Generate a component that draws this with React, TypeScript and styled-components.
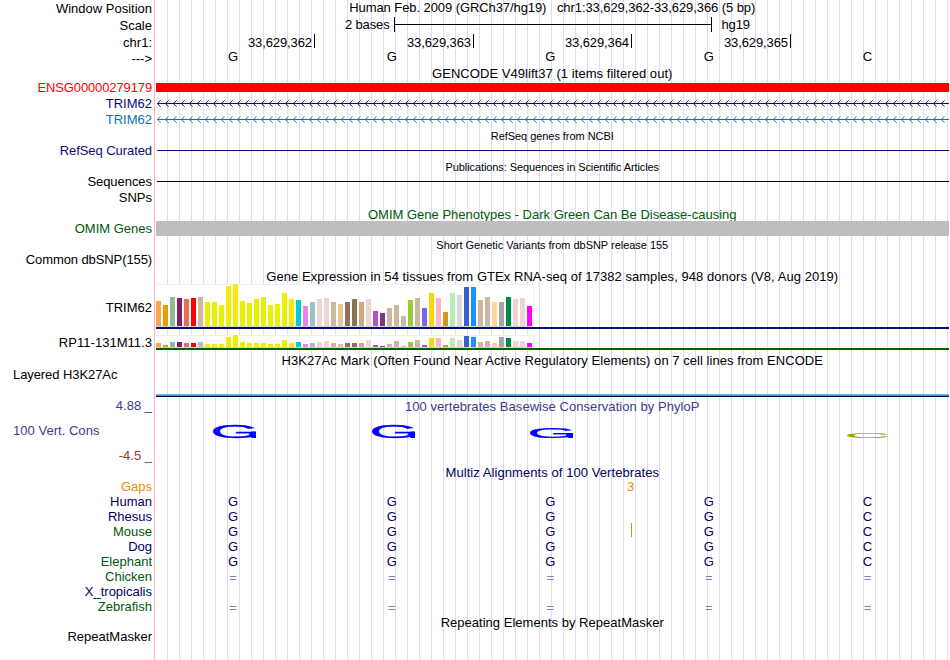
import { ReactNode } from 'react';
import styled, { createGlobalStyle } from 'styled-components';

const GlobalStyle = createGlobalStyle`
	body {
		margin: 0;
		background: #fff;
	}
`;

const Browser = styled.div`
	width: 949px;
	height: 660px;
	overflow: hidden;
	font: 13px/15px 'Liberation Sans', Arial, sans-serif;
	color: #000;
	background:
		linear-gradient(#ffb4b4, #ffb4b4) 154px 0 / 1px 100% no-repeat,
		repeating-linear-gradient(
				to right,
				transparent 0 11px,
				#dcdcf8 11px 12px
			)
			156px 0 / 793px 100% no-repeat;
`;

const StyledRow = styled.div<{ $height: number }>`
	display: flex;
	height: ${(p) => p.$height}px;
`;

const Label = styled.div<{
	$top?: number;
	$color?: string;
	$left?: boolean;
	$spacing?: number;
}>`
	box-sizing: border-box;
	flex: none;
	width: 152px;
	margin-right: 4px;
	padding-top: ${(p) => p.$top ?? 0}px;
	padding-left: ${(p) => (p.$left ? 13 : 0)}px;
	text-align: ${(p) => (p.$left ? 'left' : 'right')};
	color: ${(p) => p.$color ?? '#000'};
	letter-spacing: ${(p) => p.$spacing ?? 0}px;
	white-space: pre;
`;

const Content = styled.div`
	position: relative;
	width: 793px;
`;

const Title = styled.div<{
	$top?: number;
	$color?: string;
	$small?: boolean;
	$spacing?: number;
}>`
	padding-top: ${(p) => p.$top ?? 0}px;
	padding-right: 0.5px;
	font-size: ${(p) => (p.$small ? 11 : 13)}px;
	line-height: ${(p) => (p.$small ? 12 : 15)}px;
	letter-spacing: ${(p) => p.$spacing ?? 0}px;
	color: ${(p) => p.$color ?? '#000'};
	text-align: center;
	white-space: pre;
`;

const Scale = styled.div`
	display: flex;
	padding-left: 189px;
	letter-spacing: -0.15px;
`;

const ScaleBar = styled.div`
	box-sizing: border-box;
	width: 318px;
	height: 15px;
	margin: 0 9px 0 5px;
	border: solid #000;
	border-width: 0 1px;
	background: linear-gradient(#000, #000) 0 7px / 100% 1px no-repeat;
`;

const Ruler = styled.div`
	display: grid;
	grid-template-columns: 159px 159px 158px 159px;
	height: 14px;
	letter-spacing: -0.1px;
`;

const Tick = styled.div`
	padding: 1px 2px 0 0;
	border-right: 1px solid #000;
	height: 13px;
	text-align: right;
`;

const Bases = styled.div<{ $color?: string; $top?: number }>`
	display: grid;
	grid-template-columns: repeat(5, 158.6px);
	padding-top: ${(p) => p.$top ?? 0}px;
	color: ${(p) => p.$color ?? '#000'};
	text-align: center;
	span {
		padding-right: 4.4px;
	}
`;

const Bar = styled.div<{ $top?: number; $height: number; $color: string }>`
	height: ${(p) => p.$height}px;
	margin-top: ${(p) => p.$top ?? 0}px;
	background: ${(p) => p.$color};
`;

const Line = styled.div<{ $color: string }>`
	height: 1px;
	margin: 7px 0 0 1px;
	background: ${(p) => p.$color};
`;

const StyledArrows = styled.svg`
	display: block;
	margin-top: 4px;
`;

const Tissues = styled.div<{ $height: number }>`
	box-sizing: border-box;
	display: flex;
	align-items: flex-end;
	gap: 2px;
	width: 378px;
	height: ${(p) => p.$height}px;
	border: 1px solid #f0f0f0;
	border-left: 0;
	border-bottom-color: #d2d2d2;
	background: #fff;
`;

const Tissue = styled.div<{ $height: number; $color: string }>`
	flex: none;
	width: 5px;
	height: ${(p) => p.$height}px;
	background: ${(p) => p.$color};
`;

const Signal = styled.div`
	height: 3px;
	margin-top: 27px;
	background: linear-gradient(#5abef0 0 1px, #3c96d2 1px 2px, #000028 2px 3px);
`;

const LogoCell = styled.svg`
	width: 158.6px;
	height: 25px;
	overflow: visible;
`;

const GapCount = styled.div`
	padding-left: 471px;
	color: #f08c00;
`;

const InsertMark = styled.div`
	position: absolute;
	left: 475px;
	top: -1px;
	width: 1px;
	height: 14px;
	background: #dc8c14;
`;

const navy = '#000064';
const green = '#005a0a';

// colour, TRIM62 height, RP11-131M11.3 height
const tissues: [string, number, number][] = [
	['#ffa54f', 25, 4],
	['#ee9a00', 21, 2],
	['#8fbc8f', 29, 5],
	['#8b1c62', 28, 5],
	['#ee6a50', 27, 4],
	['#ff0000', 28, 4],
	['#cdb79e', 29, 5],
	['#eeee00', 24, 3],
	['#eeee00', 24, 3],
	['#eeee00', 21, 3],
	['#eeee00', 40, 10],
	['#eeee00', 42, 12],
	['#eeee00', 25, 5],
	['#eeee00', 23, 4],
	['#eeee00', 27, 4],
	['#eeee00', 29, 4],
	['#eeee00', 21, 3],
	['#eeee00', 22, 3],
	['#eeee00', 33, 7],
	['#eeee00', 27, 4],
	['#00cdcd', 26, 5],
	['#ee82ee', 20, 3],
	['#9ac0cd', 24, 4],
	['#eed5d2', 27, 5],
	['#eed5d2', 28, 6],
	['#cdb79e', 24, 4],
	['#eec591', 22, 3],
	['#8b7355', 24, 4],
	['#8b7355', 27, 4],
	['#cdaa7d', 24, 4],
	['#eed5d2', 27, 7],
	['#b452cd', 15, 2],
	['#7a378b', 13, 1],
	['#cdb79e', 18, 3],
	['#cdb79e', 21, 6],
	['#cdb79e', 10, 1],
	['#9acd32', 26, 5],
	['#cdb79e', 28, 7],
	['#7a67ee', 18, 2],
	['#ffd700', 33, 9],
	['#ffb6c1', 28, 9],
	['#cd9b1d', 14, 2],
	['#b4eeb4', 33, 9],
	['#d9d9d9', 31, 7],
	['#3a5fcd', 39, 11],
	['#1e90ff', 39, 10],
	['#cdb79e', 26, 5],
	['#cdb79e', 29, 6],
	['#ffd39b', 24, 4],
	['#a6a6a6', 24, 10],
	['#008b45', 29, 9],
	['#eed5d2', 27, 6],
	['#eed5d2', 28, 6],
	['#ff00ff', 20, 4],
];

const species: [string, string, string][] = [
	['Human', navy, 'GGGGC'],
	['Rhesus', navy, 'GGGGC'],
	['Mouse', green, 'GGGGC'],
	['Dog', navy, 'GGGGC'],
	['Elephant', green, 'GGGGC'],
	['Chicken', green, '====='],
	['X_tropicalis', navy, ''],
	['Zebrafish', green, '====='],
];

interface RowProps {
	height: number;
	label?: string;
	top?: number;
	color?: string;
	left?: boolean;
	spacing?: number;
	children?: ReactNode;
}

function Row({ height, label, top, color, left, spacing, children }: RowProps) {
	return (
		<StyledRow $height={height}>
			<Label $top={top} $color={color} $left={left} $spacing={spacing}>
				{label}
			</Label>
			<Content>{children}</Content>
		</StyledRow>
	);
}

function Arrows({ color }: { color: string }) {
	const chevrons = Array.from({ length: 99 }, (_, i) => i * 8 + 1);
	return (
		<StyledArrows width="793" height="7" fill="none" stroke={color}>
			<path d="M1 3.5H793" />
			<path
				strokeWidth="0.95"
				d={chevrons.map((x) => `M${x + 3.5} 0.3L${x + 0.5} 3.5L${x + 3.5} 6.7`).join('')}
			/>
		</StyledArrows>
	);
}

function Logo({ base, height }: { base?: string; height?: number }) {
	if (!base || !height) return <LogoCell />;
	const isG = base === 'G';
	const color = isG ? '#0000ff' : '#a0a000';
	return (
		<LogoCell>
			<text
				transform={`translate(54.2 14.9) scale(${isG ? 0.635 : 0.64} ${height / 71.5})`}
				fontSize="100"
				fill={color}
				stroke={color}
				strokeWidth="1.5"
			>
				{base}
			</text>
			{isG && <rect x="95.4" y={15 - height / 2} width="4.6" height={height / 2} fill={color} />}
		</LogoCell>
	);
}

export default function App() {
	return (
		<Browser>
			<GlobalStyle />
			<Row height={17} label="Window Position" top={1}>
				<Title $spacing={-0.08}>
					{'Human Feb. 2009 (GRCh37/hg19)\u00a0\u00a0 chr1:33,629,362-33,629,366 (5 bp)'}
				</Title>
			</Row>
			<Row height={17} label="Scale" top={1}>
				<Scale>
					<span>2 bases</span>
					<ScaleBar />
					<span>hg19</span>
				</Scale>
			</Row>
			<Row height={15} label="chr1:" top={1}>
				<Ruler>
					<Tick>33,629,362</Tick>
					<Tick>33,629,363</Tick>
					<Tick>33,629,364</Tick>
					<Tick>33,629,365</Tick>
				</Ruler>
			</Row>
			<Row height={17} label="--->" top={2}>
				<Bases>
					{[...'GGGGC'].map((base, i) => (
						<span key={i}>{base}</span>
					))}
				</Bases>
			</Row>
			<Row height={14}>
				<Title $spacing={0.05}>GENCODE V49lift37 (1 items filtered out)</Title>
			</Row>
			<Row height={16} label="ENSG00000279179" color="#ff0000" spacing={-0.12}>
				<Bar $top={3} $height={9} $color="#ff0000" />
			</Row>
			<Row height={16} label="TRIM62" color="#0c0c78">
				<Arrows color="#0c0c78" />
			</Row>
			<Row height={16} label="TRIM62" color="#1470b4">
				<Arrows color="#1470b4" />
			</Row>
			<Row height={15}>
				<Title $small $top={2} $spacing={-0.05}>
					RefSeq genes from NCBI
				</Title>
			</Row>
			<Row height={16} label="RefSeq Curated" color="#0c0c78" spacing={-0.07}>
				<Line $color="#0c0c78" />
			</Row>
			<Row height={15}>
				<Title $small $top={2} $spacing={-0.09}>
					Publications: Sequences in Scientific Articles
				</Title>
			</Row>
			<Row height={16} label="Sequences" spacing={-0.05}>
				<Line $color="#000" />
			</Row>
			<Row height={16} label="SNPs" />
			<Row height={15}>
				<Title $top={1} $color={green}>
					OMIM Gene Phenotypes - Dark Green Can Be Disease-causing
				</Title>
			</Row>
			<Row height={15} label="OMIM Genes" color={green}>
				<Bar $height={15} $color="#bebebe" />
			</Row>
			<Row height={16}>
				<Title $small $top={3} $spacing={-0.03}>
					Short Genetic Variants from dbSNP release 155
				</Title>
			</Row>
			<Row height={16} label="Common dbSNP(155)" spacing={-0.1} />
			<Row height={16}>
				<Title $top={1} $spacing={0.05}>
					Gene Expression in 54 tissues from GTEx RNA-seq of 17382 samples, 948 donors (V8, Aug 2019)
				</Title>
			</Row>
			<Row height={51} label="TRIM62" top={16}>
				<Tissues $height={43}>
					{tissues.map(([color, height], i) => (
						<Tissue key={i} $height={height} $color={color} />
					))}
				</Tissues>
				<Bar $height={2} $color="#0c0c78" />
			</Row>
			<Row height={17} label="RP11-131M11.3" spacing={0.03}>
				<Tissues $height={13}>
					{tissues.map(([color, , height], i) => (
						<Tissue key={i} $height={height} $color={color} />
					))}
				</Tissues>
				<Bar $height={2} $color="#006400" />
			</Row>
			<Row height={15}>
				<Title $top={1} $spacing={0.045}>
					H3K27Ac Mark (Often Found Near Active Regulatory Elements) on 7 cell lines from ENCODE
				</Title>
			</Row>
			<Row height={30} label="Layered H3K27Ac" left spacing={-0.08}>
				<Signal />
			</Row>
			<Row height={26} label="4.88 _" top={1} color="#3c3c8c">
				<Title $top={2} $color="#3c3c8c" $spacing={0.055}>
					100 vertebrates Basewise Conservation by PhyloP
				</Title>
			</Row>
			<Row height={25} label="100 Vert. Cons" left color="#3c3c8c" spacing={0.03}>
				<Bases>
					<Logo base="G" height={13} />
					<Logo base="G" height={13} />
					<Logo base="G" height={10} />
					<Logo />
					<Logo base="C" height={5} />
				</Bases>
			</Row>
			<Row height={17} label="-4.5 _" color="#8c3c3c" />
			<Row height={14}>
				<Title $color={navy} $spacing={0.07}>
					Multiz Alignments of 100 Vertebrates
				</Title>
			</Row>
			<Row height={15} label="Gaps" color="#f08c00">
				<GapCount>3</GapCount>
			</Row>
			{species.map(([name, color, bases]) => {
				const unaligned = bases[0] === '=';
				return (
					<Row key={name} height={15} label={name} color={color}>
						<Bases $color={unaligned ? '#8080b4' : navy} $top={unaligned ? 1 : 0}>
							{[...bases].map((base, i) => (
								<span key={i}>{base}</span>
							))}
						</Bases>
						{name === 'Mouse' && <InsertMark />}
					</Row>
				);
			})}
			<Row height={15}>
				<Title $top={1} $spacing={0.02}>
					Repeating Elements by RepeatMasker
				</Title>
			</Row>
			<Row height={31} label="RepeatMasker" />
		</Browser>
	);
}
